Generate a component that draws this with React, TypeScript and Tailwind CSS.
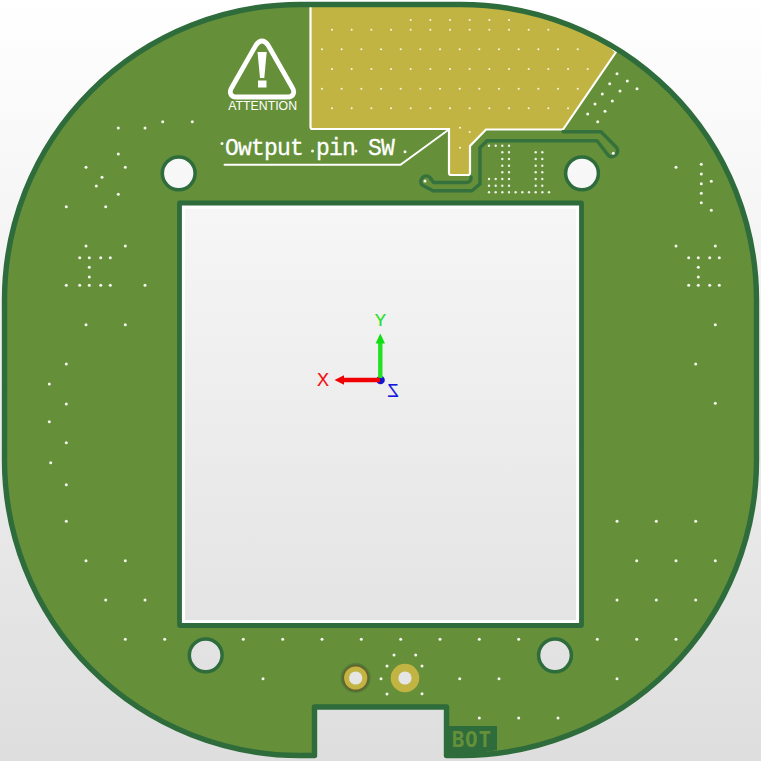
const R = 295.5;
const OUT = `M4.5 300 A${R} ${R} 0 0 1 300 4.5 L460 4.5 A${R} ${R} 0 0 1 756.5 300 L756.5 460 A${R} ${R} 0 0 1 460 755.5 L446.5 755.5 L446.5 707 L314.5 707 L314.5 755.5 L300 755.5 A${R} ${R} 0 0 1 4.5 460 Z`;
const circle = (cx: number, cy: number, r: number) => `M${cx - r} ${cy} a${r} ${r} 0 1 0 ${2 * r} 0 a${r} ${r} 0 1 0 ${-2 * r} 0 Z`;
const HOLES = [[178.7, 173.3], [582, 173.3], [205.7, 655.3], [555, 655.3]];
const WINDOW = "M179.5 203 L581.5 203 L581.5 625.5 L179.5 625.5 Z";
const via = [[355.7, 678], [405, 678]];
const BOARD = [OUT, WINDOW, ...HOLES.map(([x, y]) => circle(x, y, 16.5)), ...via.map(([x, y]) => circle(x, y, 6.5))].join(" ");

const GOLD = "M310.5 0 L310.5 127 Q310.5 129 312.5 129 L449 129 L449 173 Q449 175 451 175 L468 175 Q470 175 470 173 L470 146 L486 129.5 L563 129.5 L616 52 L560 0 Z";

const dots: [number, number][] = [
  [118.3,128],[145,128],[162.7,121.7],[192.3,121.7],[118.3,154],[86,167.3],[125.3,167.3],[102,177.3],[96.3,186],[118.3,194.3],[66.3,206.7],[105.7,206.7],
  [86,246],[125.3,246],[79.7,257.7],[89.3,257.7],[100.7,257.7],[110.3,257.7],[89.3,267.3],[89.3,277],[66.3,285.3],[79.7,285.3],[89.3,285.3],[100.7,285.3],[110.3,285.3],[145,285.3],[86,324.7],[125.3,324.7],
  [66.3,364],[49.3,384],[66.3,404],[49.3,421.7],[66.3,442.7],[50.7,462.7],[66.3,484.7],[66.3,521.3],[86,560.7],[125.3,560.7],[105.7,600],[145,600],
  [125.3,639.3],[164.7,639.3],[243.3,639.3],[282.7,639.3],[322,639.3],[361.3,639.3],[400.7,639.3],[440,639.3],[479.3,639.3],[518.7,639.3],[597.3,639.3],[636.7,639.3],[676,639.3],
  [263,678.7],[394,655],[415.7,655],[387,666],[422,666],[381,678.7],[387,694],[422,693.7],[459.7,678.7],[499,678.7],[479.3,718],[518.7,718],[558,718],
  [617,521.3],[656.3,521.3],[695.7,521.3],[636.7,560.7],[676,560.7],[715.3,560.7],[617,600],[656.3,600],[695.7,600],[617,678.7],
  [676,167.3],[701.3,164.3],[701.3,174],[701.3,183.7],[701.3,193.3],[701.3,202.7],[711.3,181.3],[711.3,210.3],[676,246],[715.3,246],
  [688.7,257.7],[698.3,257.7],[709.7,257.7],[719.3,257.7],[698.3,267.3],[698.3,277],[688.7,285.3],[698.3,285.3],[709.7,285.3],[719.3,285.3],[715.3,324.7],[695.7,364],[715.3,403.3],
  [617,73.7],[609.7,83.7],[627.3,81],[620,91],[637,88.7],[602.3,94],[612.3,101],[595,104],[605,111.3],[587.7,114],[597.7,121.7],
  [613.3,153.3],[425,181],[405,151.7],[222,143.5],[312.5,151],[356,151],
];
const goldDots: [number, number][] = [[460,127.7],[469.7,132],[460,147.7]];
const step = 19.67;
const row = (y: number, start: number, n: number) => { for (let i = 0; i < n; i++) goldDots.push([start + i * step, y]); };
row(20, 410.7, 6);
row(29.7, 332, 12);
row(49.3, 322, 14);
row(69, 332, 14);
row(88.7, 322, 14);
row(108.3, 332, 13);

const small: [number, number][] = [];
[489, 495.7, 502.3, 509].forEach((x) => [145.7, 179, 185.7].forEach((y) => small.push([x, y])));
[502.3, 509].forEach((x) => [152.3, 159, 165.7, 172.3].forEach((y) => small.push([x, y])));
[535.7, 542.3].forEach((x) => [152.3, 159, 165.7, 172.3, 179, 185.7].forEach((y) => small.push([x, y])));
for (let i = 0; i < 10; i++) small.push([489 + i * 6.67, 192.3]);

const TRACE = "M563 131.7 L601 131.7 L616.8 147.8 A6 6 0 0 1 608.8 156 L597 140.7 L487 140.7 L480 147.7 L480 184 L472 190.7 L433 190.7 L422 185 A5.5 5.5 0 0 1 430 177.5 L433.5 182.5 L466 182.5 Q471.5 182.5 471 177";

export default function App() {
  return (
    <div className="h-[761px] w-[761px] overflow-hidden bg-gradient-to-b from-white to-[#dedede]">
      <svg width="761" height="761" viewBox="0 0 761 761" className="block">
        <defs>
          <clipPath id="board"><path d={OUT} /></clipPath>
        </defs>
        <path d={BOARD} fill="#658f39" fillRule="evenodd" />
        <g clipPath="url(#board)">
          <path d={GOLD} fill="#c1b442" stroke="#ffffff" strokeWidth="2.2" />
        </g>
        <path d={TRACE} fill="none" stroke="#35713c" strokeWidth="3.4" strokeLinejoin="round" strokeLinecap="round" />
        <path d={OUT} fill="none" stroke="#2e6c3c" strokeWidth="5.4" strokeLinejoin="round" />
        <path d="M446.5 726 L497 726 L497 750 Q470 755 446.5 756 Z" fill="#2e6c3c" />
        <path d="M183.3 207 L577.8 207 M183.3 205.5 L183.3 621.7 L577.8 621.7 L577.8 205.5" fill="none" stroke="#ffffff" strokeWidth="3.4" />
        <path d={WINDOW} fill="none" stroke="#2e6c3c" strokeWidth="4.8" strokeLinejoin="round" />
        {HOLES.map(([x, y]) => (
          <circle key={x} cx={x} cy={y} r="16.4" fill="none" stroke="#2e6c3c" strokeWidth="3.5" />
        ))}
        <circle cx="355.7" cy="678" r="15" fill="#4f7f3a" />
        <circle cx="355.7" cy="678" r="13.4" fill="#66622d" />
        <circle cx="355.7" cy="678" r="11.6" fill="#c1b442" />
        <circle cx="355.7" cy="678" r="6.6" fill="#e5e5e5" />
        <circle cx="405" cy="678" r="14.3" fill="#c1b442" />
        <circle cx="405" cy="678" r="6.6" fill="#e5e5e5" />
        {dots.map(([x, y], i) => (
          <circle key={i} cx={x} cy={y} r="1.5" fill="#f4f6f0" />
        ))}
        {goldDots.map(([x, y], i) => (
          <circle key={i} cx={x} cy={y} r="1.05" fill="#f7f5df" />
        ))}
        {small.map(([x, y], i) => (
          <circle key={i} cx={x} cy={y} r="1.2" fill="#eef1e6" />
        ))}
        <path d="M224.5 164.8 L400.5 164.8 L447.5 130.5" fill="none" stroke="#ffffff" strokeWidth="1.9" strokeLinecap="round" />
        <text x="225" y="155" fontFamily="'Liberation Mono', monospace" fontSize="23" letterSpacing="-0.8" fill="#ffffff" stroke="#ffffff" strokeWidth="0.3">Owtput pin SW</text>
        <path d="M262 41 C259 41 257.5 43 256 45 L231.5 88 C229 92 230.5 97 236 97 L288 97 C293.5 97 295 92 292.5 88 L268 45 C266.5 43 265 41 262 41 Z" fill="none" stroke="#ffffff" strokeWidth="4.8" />
        <path d="M257.5 52 L266.7 52 L264.3 78 L260 78 Z" fill="#ffffff" />
        <rect x="258" y="80.5" width="8.5" height="7" fill="#ffffff" />
        <text x="262.7" y="110" textAnchor="middle" fontFamily="'Liberation Sans', sans-serif" fontSize="12.3" fill="#ffffff">ATTENTION</text>
        <text x="471.8" y="747" textAnchor="middle" fontFamily="'DejaVu Sans Mono', monospace" fontWeight="700" fontSize="21" fill="#658f39" letterSpacing="0.7">BOT</text>
        <circle cx="380.5" cy="380" r="4.3" fill="#1515d0" />
        <path d="M380.3 378 L380.3 342" stroke="#22e022" strokeWidth="4.4" />
        <path d="M380.3 333.5 L385 343.5 L375.6 343.5 Z" fill="#10e010" />
        <path d="M380 380 L343 380" stroke="#f00000" strokeWidth="4.4" />
        <path d="M334.5 380 L344 375.3 L344 384.7 Z" fill="#f00000" />
        <text x="380.5" y="326" textAnchor="middle" fontFamily="'Liberation Sans', sans-serif" fontSize="17" fill="#22e022" stroke="#22e022" strokeWidth="0.2">Y</text>
        <text x="323" y="386" textAnchor="middle" fontFamily="'Liberation Sans', sans-serif" fontSize="18" fill="#f01010" stroke="#f01010" strokeWidth="0.2">X</text>
        <text transform="translate(393 397) scale(-1 1)" textAnchor="middle" fontFamily="'Liberation Sans', sans-serif" fontSize="18" fill="#1515e0" stroke="#1515e0" strokeWidth="0.2">Z</text>
      </svg>
    </div>
  );
}
